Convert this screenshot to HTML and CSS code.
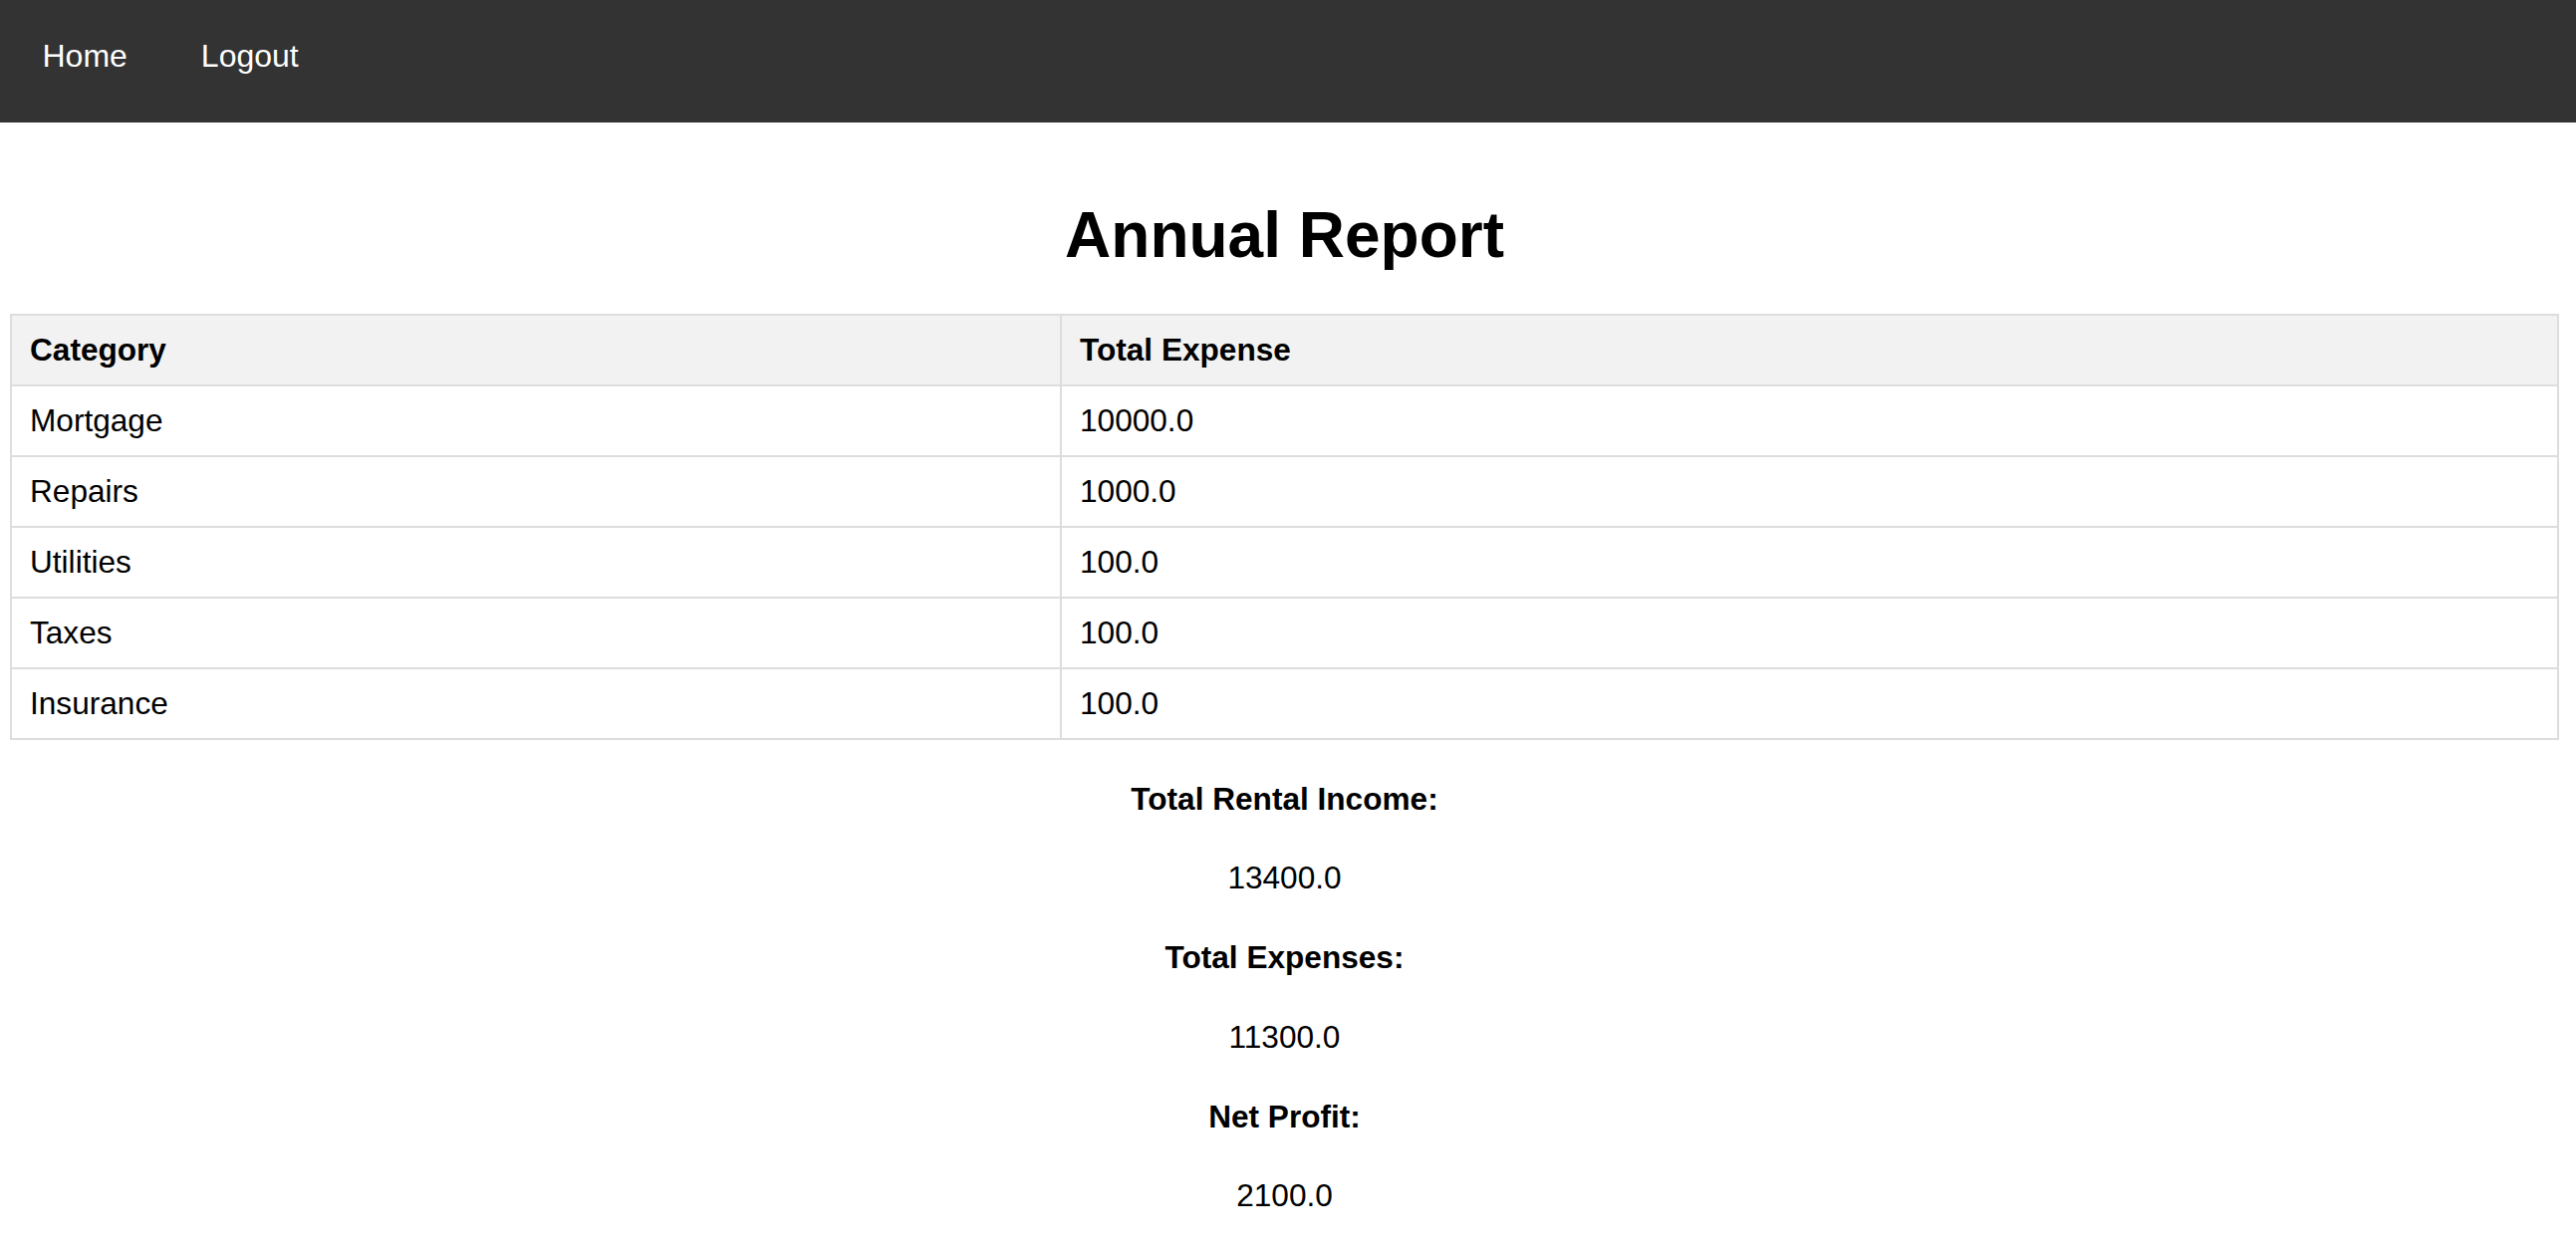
FILE: index.html
```html
<!DOCTYPE html>
<html lang="en">
<head>
<meta charset="utf-8">
<title>Annual Report</title>
<link rel="stylesheet" href="styles.css">
</head>
<body>
<nav class="navbar">
  <a class="nav-link" href="#">Home</a>
  <a class="nav-link" href="#">Logout</a>
</nav>
<main class="content">
  <h1 class="title">Annual Report</h1>
  <table class="report">
    <thead>
      <tr><th class="col-cat">Category</th><th>Total Expense</th></tr>
    </thead>
    <tbody>
      <tr><td>Mortgage</td><td>10000.0</td></tr>
      <tr><td>Repairs</td><td>1000.0</td></tr>
      <tr><td>Utilities</td><td>100.0</td></tr>
      <tr><td>Taxes</td><td>100.0</td></tr>
      <tr><td>Insurance</td><td>100.0</td></tr>
    </tbody>
  </table>
  <div class="summary">
    <p class="label">Total Rental Income:</p>
    <p class="value">13400.0</p>
    <p class="label">Total Expenses:</p>
    <p class="value">11300.0</p>
    <p class="label">Net Profit:</p>
    <p class="value">2100.0</p>
  </div>
</main>
</body>
</html>
```
FILE: styles.css
```css
html, body {
  margin: 0;
  padding: 0;
  background: #fff;
}
body {
  font-family: "Liberation Sans", Arial, sans-serif;
  font-size: 31.6px;
  color: #000;
}
.navbar {
  display: flex;
  gap: 74px;
  background: #333;
  padding: 38px 0 49px 42.5px;
}
.nav-link {
  color: #fff;
  text-decoration: none;
  font-size: 32px;
  line-height: 36px;
}
.content {
  padding: 0 17px 40px 10px;
}
.title {
  margin: 76px 0 42px;
  font-size: 64px;
  line-height: 74px;
  font-weight: bold;
  text-align: center;
}
.report {
  width: 100%;
  border-collapse: collapse;
}
.report th,
.report td {
  border: 2px solid #ddd;
  padding: 16px 18px;
  line-height: 37px;
  text-align: left;
  font-size: 31.6px;
}
.report th {
  background: #f2f2f2;
  font-weight: bold;
}
.col-cat {
  width: 1016px;
}
.summary {
  display: flex;
  flex-direction: column;
  align-items: center;
  gap: 43.8px;
  padding-top: 40.5px;
}
.summary p {
  margin: 0;
  line-height: 36px;
}
.label {
  font-weight: bold;
}
```
